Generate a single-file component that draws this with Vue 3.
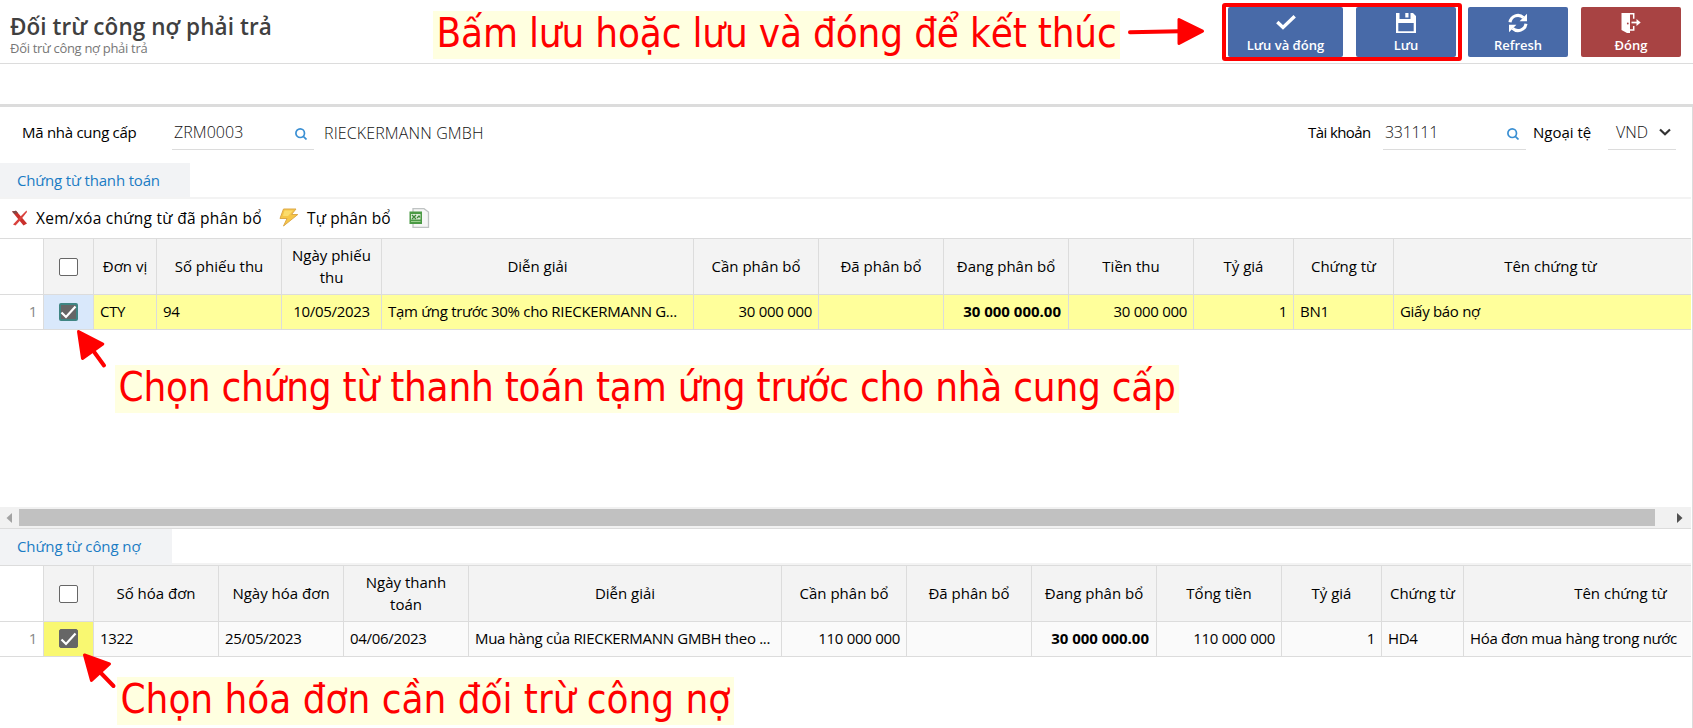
<script setup>
const paymentColumns = [
  { label: '', kind: 'index' },
  { label: '', kind: 'check' },
  { label: 'Đơn vị' },
  { label: 'Số phiếu thu' },
  { label: 'Ngày phiếu thu' },
  { label: 'Diễn giải' },
  { label: 'Cần phân bổ' },
  { label: 'Đã phân bổ' },
  { label: 'Đang phân bổ' },
  { label: 'Tiền thu' },
  { label: 'Tỷ giá' },
  { label: 'Chứng từ' },
  { label: 'Tên chứng từ' },
]
const paymentRow = [
  { text: '1', cls: 'index' },
  { text: '', cls: 'check' },
  { text: 'CTY' },
  { text: '94' },
  { text: '10/05/2023', cls: 'center' },
  { text: 'Tạm ứng trước 30% cho RIECKERMANN G...' },
  { text: '30 000 000', cls: 'num' },
  { text: '' },
  { text: '30 000 000.00', cls: 'num strong' },
  { text: '30 000 000', cls: 'num' },
  { text: '1', cls: 'num' },
  { text: 'BN1' },
  { text: 'Giấy báo nợ' },
]
const debtColumns = [
  { label: '', kind: 'index' },
  { label: '', kind: 'check' },
  { label: 'Số hóa đơn' },
  { label: 'Ngày hóa đơn' },
  { label: 'Ngày thanh toán' },
  { label: 'Diễn giải' },
  { label: 'Cần phân bổ' },
  { label: 'Đã phân bổ' },
  { label: 'Đang phân bổ' },
  { label: 'Tổng tiền' },
  { label: 'Tỷ giá' },
  { label: 'Chứng từ' },
  { label: 'Tên chứng từ' },
]
const debtRow = [
  { text: '1', cls: 'index' },
  { text: '', cls: 'check' },
  { text: '1322' },
  { text: '25/05/2023' },
  { text: '04/06/2023' },
  { text: 'Mua hàng của RIECKERMANN GMBH theo ...' },
  { text: '110 000 000', cls: 'num' },
  { text: '' },
  { text: '30 000 000.00', cls: 'num strong' },
  { text: '110 000 000', cls: 'num' },
  { text: '1', cls: 'num' },
  { text: 'HD4' },
  { text: 'Hóa đơn mua hàng trong nước' },
]
const tables = {
  payment: { columns: paymentColumns, row: paymentRow },
  debt: { columns: debtColumns, row: debtRow },
}
</script>

<template>
  <div class="page">
    <header class="topbar">
      <div class="titles">
        <h1>Đối trừ công nợ phải trả</h1>
        <p>Đối trừ công nợ phải trả</p>
      </div>
      <div class="actions">
        <button class="action wide">
          <svg width="20" height="20" viewBox="0 0 20 20"><path d="M1.300 9 7 14.500 18.700 3.300" fill="none" stroke="#fff" stroke-width="3.400" /></svg>
          <span>Lưu và đóng</span>
        </button>
        <button class="action save">
          <svg width="20" height="20" viewBox="0 0 20 20"><path fill="#fff" fill-rule="evenodd" d="M0 0h3.500v6h11V0H17l3 3v17H0zM2.300 10v8.300h15.400V10zM9.300 0h3.200v4.600H9.300z" /></svg>
          <span>Lưu</span>
        </button>
        <button class="action refresh">
          <svg width="20" height="20" viewBox="0 0 20 20"><g fill="none" stroke="#fff" stroke-width="3.100"><path d="M2 9.300A8 8 0 0 1 15.400 4.600" /><path d="M18 10.700A8 8 0 0 1 4.600 15.400" /></g><path d="M19 .8v7.400h-7.400zM1 19.200v-7.400h7.400z" fill="#fff" /></svg>
          <span>Refresh</span>
        </button>
        <button class="action close">
          <svg width="20" height="20" viewBox="0 0 20 20"><path d="M.5 0H9v20H6L.5 17z" fill="#fff" /><path d="M9 .8h3.700v5M9 17h3.700v-4" fill="none" stroke="#fff" stroke-width="1.500" /><path d="M10.500 9.500h7" fill="none" stroke="#fff" stroke-width="1.700" /><path d="M15.500 6 19.700 9.500 15.500 13z" fill="#fff" /><circle cx="6.800" cy="10.500" r=".9" fill="#a84343" /></svg>
          <span>Đóng</span>
        </button>
      </div>
    </header>
    <div class="subbar"></div>

    <main class="body">
      <div class="filters">
        <label class="supplier-label">Mã nhà cung cấp</label>
        <div class="field supplier"><span>ZRM0003</span>
          <svg class="lens" width="12" height="12" viewBox="0 0 12 12"><circle cx="5.200" cy="5.200" r="4.300" /><path d="M8.300 8.300 11.500 11.500" /></svg>
        </div>
        <span class="supplier-name">RIECKERMANN GMBH</span>
        <label class="account-label">Tài khoản</label>
        <div class="field account"><span>331111</span>
          <svg class="lens" width="12" height="12" viewBox="0 0 12 12"><circle cx="5.200" cy="5.200" r="4.300" /><path d="M8.300 8.300 11.500 11.500" /></svg>
        </div>
        <label class="currency-label">Ngoại tệ</label>
        <div class="field currency"><span>VND</span>
          <svg width="12" height="8" viewBox="0 0 12 8"><path d="M1 1.500 6 6.300 11 1.500" fill="none" stroke="#333" stroke-width="2.200" /></svg>
        </div>
      </div>

      <div class="tabs first"><div class="tab">Chứng từ thanh toán</div></div>

      <div class="toolbar">
        <svg class="ico-x" width="17" height="16" viewBox="0 0 17 16"><path d="M1 1.500 5 .8 16 13.500 12.500 15.500z" fill="#c9302c" /><path d="M15.500.5 9.500 6.500 2 14.500 4.500 15.500 10 9.500 16 2z" fill="#d9413c" /><path d="M1 1.500 5 .8 7 3 3.500 4z" fill="#7d4a48" /></svg>
        <span class="tool-a">Xem/xóa chứng từ đã phân bổ</span>
        <svg class="ico-bolt" width="20" height="19" viewBox="0 0 20 19"><path d="M4.500 1H17L12.500 6.500H18.800L4.500 18 8 10.500H1z" fill="#f6c648" stroke="#dca94a" stroke-linejoin="round" /><path d="M5.500 2.500H14L9 8H4z" fill="#fbdc6c" /></svg>
        <span class="tool-b">Tự phân bổ</span>
        <svg class="ico-xls" width="21" height="20" viewBox="0 0 21 20"><path d="M4 .7h11L19.500 4v15.300H4z" fill="#f6f6f6" stroke="#bfc3c3" stroke-width="1.300" /><rect x=".5" y="3.500" width="12.500" height="12.500" fill="#4b9a45" /><path d="M2 6h9.500v5.500H2z" fill="#dcecd8" /><path d="M3 7l4 4M7 7l-4 4M8 10l2-2 1 1.500" stroke="#3c8738" stroke-width="1.300" fill="none" /><path d="M2 13.500h9.500" stroke="#9cd08f" /></svg>
      </div>

      <template v-for="(table, name) in tables" :key="name">
        <div v-if="name === 'debt'" class="tabs second"><div class="tab">Chứng từ công nợ</div></div>
        <section class="grid" :class="name">
          <div class="line head">
            <div v-for="(col, i) in table.columns" :key="i" class="cell" :class="col.kind">
              <i v-if="col.kind === 'check'" class="box"></i>
              <span v-else>{{ col.label }}</span>
            </div>
          </div>
          <div class="line data">
            <div v-for="(cell, i) in table.row" :key="i" class="cell" :class="cell.cls">
              <i v-if="cell.cls === 'check'" class="box on">
                <svg width="17" height="14" viewBox="0 0 17 14"><path d="M1.500 7.500 6 12 15.500 1.500" fill="none" stroke="#fff" stroke-width="2.200" /></svg>
              </i>
              <span v-else>{{ cell.text }}</span>
            </div>
          </div>
        </section>
        <div v-if="name === 'payment'" class="scrollbar">
          <svg width="6" height="10" viewBox="0 0 6 10"><path d="M6 0v10L.5 5z" fill="#a3a3a3" /></svg>
          <div class="thumb"></div>
          <svg width="6" height="10" viewBox="0 0 6 10"><path d="M0 0v10L5.500 5z" fill="#505050" /></svg>
        </div>
      </template>
    </main>

    <!-- Instruction callouts laid over the screen -->
    <div class="frame"></div>
    <div class="note n1"><span>Bấm lưu hoặc lưu và đóng để kết thúc</span></div>
    <div class="note n2"><span>Chọn chứng từ thanh toán tạm ứng trước cho nhà cung cấp</span></div>
    <div class="note n3"><span>Chọn hóa đơn cần đối trừ công nợ</span></div>
    <svg class="arrows" width="1693" height="728" viewBox="0 0 1693 728">
      <g stroke="#f00" stroke-width="4" stroke-linecap="round" stroke-linejoin="round" fill="#f00">
        <path d="M1130 32.200 1180 31.200" /><path d="M1179 19.500V43.500L1202.500 31.200z" stroke-width="3" />
        <path d="M104 365.500 92 349" /><path d="M78.500 331.500 102.800 344 82.500 358.500z" stroke-width="3" />
        <path d="M113.500 686 98 670" /><path d="M84.500 655 109.500 664 91.500 680.500z" stroke-width="3" />
      </g>
    </svg>
  </div>
</template>

<style>
body { margin: 0; background: #fff; }
</style>

<style scoped>
.page {
  position: relative;
  width: 1693px;
  height: 728px;
  overflow: hidden;
  background: #fff;
  color: #000;
  font-family: "Open Sans", "Noto Sans", sans-serif;
  font-size: 15px;
  display: flex;
  flex-direction: column;
}
.page *, .page { box-sizing: border-box; }
.topbar {
  height: 64px;
  flex: none;
  border-bottom: 1px solid #dcdcdc;
  display: flex;
  justify-content: space-between;
  padding: 7px 12px 0 10px;
}
h1 { margin: 5px 0 0; font-size: 22.5px; line-height: 30px; font-weight: 600; color: #404040; letter-spacing: 0.07px; }
.titles p { margin: -2px 0 0; font-size: 13px; line-height: 16px; color: #777; letter-spacing: -0.3px; }
.titles { white-space: nowrap; }
.actions { display: flex; }
.action {
  width: 100px; height: 50px; border: 0; border-radius: 2px; padding: 6px 0 0;
  background: #486aa8; color: #fff; font: 600 13px/18px "Open Sans", sans-serif;
  display: flex; flex-direction: column; align-items: center; gap: 3px;
}
.action.wide { width: 115px; }
.save { margin-left: 13px; }
.refresh { margin-left: 12px; }
.close { margin-left: 13px; background: #a84343; }
.subbar { height: 40px; flex: none; }
.body { flex: 1; border-top: 3px solid #dcdcdc; border-right: 1px solid #dcdcdc; padding-right: 1px; min-height: 0; }

.filters { display: flex; height: 56px; padding: 10px 15px 0 22px; line-height: 30px; white-space: nowrap; letter-spacing: -0.28px; }
.field { height: 33px; border-bottom: 1px solid #dcdcdc; display: flex; justify-content: space-between; align-items: center; color: #111; padding: 0 7px 0 2px; font-size: 16px; font-weight: 320; letter-spacing: 0.05px; }
.field span { margin-top: -2px; }
.lens { margin-top: 2px; fill: none; stroke: #3a8fd3; stroke-width: 1.7; }
.supplier-label { width: 150px; }
.supplier { width: 142px; }
.supplier-name { margin-left: 10px; color: #111; line-height: 33px; font-size: 16px; font-weight: 320; letter-spacing: 0.13px; }
.account-label { margin-left: auto; width: 75px; letter-spacing: -0.6px; }
.account { width: 143px; letter-spacing: -0.3px; }
.currency-label { margin-left: 7px; width: 75px; letter-spacing: 0; }
.currency { width: 68px; padding: 0 5px 0 8px; }
.currency svg { margin-top: -2px; }

.tabs { border-bottom: 2px solid #f3f3f3; display: flex; }
.tab { background: #f2f3f5; color: #1b7cc4; padding-left: 17px; font-weight: 500; height: 34px; line-height: 35px; letter-spacing: -0.17px; }
.first { height: 36px; }
.first .tab { width: 190px; }
.second { height: 36px; }
.second .tab { width: 172px; height: 36px; letter-spacing: -0.08px; }

.toolbar { height: 39px; display: flex; align-items: center; padding: 0 0 2px 11px; font-weight: 500; white-space: nowrap; letter-spacing: 0.1px; font-size: 15.5px; }
.tool-a { margin-left: 8px; width: 243px; letter-spacing: 0.26px; }
.tool-b { margin-left: 8px; width: 102px; }

.grid { border-top: 1px solid #dcdcdc; overflow: hidden; }
.payment { height: 269px; }
.line { display: grid; width: 1778px; }
.payment .line { grid-template-columns: 44px 50px 63px 125px 100px 312px 125px 125px 125px 125px 100px 100px 314px; }
.debt .line { grid-template-columns: 44px 50px 125px 125px 125px 313px 125px 125px 125px 125px 100px 82px 314px; }
.cell { border-right: 1px solid #dcdcdc; border-bottom: 1px solid #dcdcdc; display: flex; align-items: center; padding: 0 6px; overflow: hidden; min-width: 0; }
.head .cell { height: 56px; background: #f3f3f3; font-weight: 500; justify-content: center; text-align: center; line-height: 22px; }
.head span { margin-top: -2px; }
.head .cell.index { background: #fff; }
.data .cell { height: 35px; white-space: nowrap; background: #fafafa; letter-spacing: -0.3px; }
.data span { margin-top: -3px; }
.payment .data .cell { background: #ffff9b; }
.payment .data .check { background: #d9e8fb; }
.debt .data .check { background: #f9f871; }
.line.data .cell.index { background: #fff; color: #888; justify-content: flex-end; }
.line .cell.check { justify-content: center; padding: 0; }
.center { justify-content: center; }
.num { justify-content: flex-end; }
.line.data .strong { font-weight: 700; letter-spacing: 0; padding-right: 7px; }
.box { width: 19px; height: 18px; border: 1px solid #666; border-radius: 2px; background: #fff; display: flex; align-items: center; justify-content: center; }
.box.on { background: #666; height: 19px; margin-top: -1px; }
.payment .box.on { border: 2px solid #3f8583; height: 18px; margin-top: 0; }
.box svg { flex: none; }

.scrollbar { height: 22px; background: #f1f1f1; border-bottom: 1px solid #dcdcdc; display: flex; align-items: center; padding: 0 8px 0 6px; justify-content: space-between; }
.thumb { width: 1636px; height: 17px; background: #c1c1c1; margin-right: 16px; }

.frame { position: absolute; left: 1222px; top: 3px; width: 240px; height: 58px; border: 4px solid #f00; border-radius: 3px; }
.note { position: absolute; height: 48px; background: #ffffe0; color: #f00; font: 40px/44px "DejaVu Sans Condensed", "DejaVu Sans", sans-serif; font-stretch: condensed; padding-left: 3.5px; white-space: nowrap; }
.n1 { left: 433px; top: 11px; width: 687px; letter-spacing: -0.18px; }
.n2 { left: 115px; top: 365px; width: 1064px; letter-spacing: -0.24px; }
.n3 { left: 117px; top: 677px; width: 617px; letter-spacing: -0.03px; }
.arrows { position: absolute; left: 0; top: 0; pointer-events: none; }
</style>
